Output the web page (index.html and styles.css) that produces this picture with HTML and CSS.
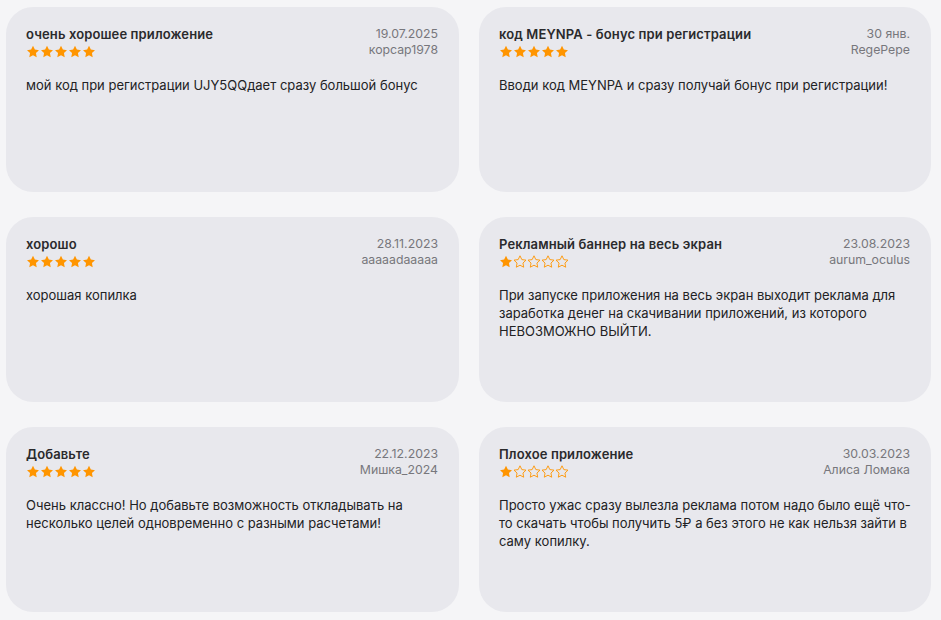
FILE: index.html
```html
<!DOCTYPE html>
<html lang="ru">
<head>
<meta charset="utf-8">
<link rel="stylesheet" href="styles.css">
</head>
<body>
<svg width="0" height="0" class="defs">
  <defs>
    <path id="star" d="M7 0.8 L8.85 4.6 L13 5.15 L9.95 8.05 L10.7 12.2 L7 10.2 L3.3 12.2 L4.05 8.05 L1 5.15 L5.15 4.6 Z"/>
  </defs>
</svg>
<main class="grid">
  <article class="card">
    <div class="head">
      <div class="left">
        <div class="title">очень хорошее приложение</div>
        <div class="stars s5"></div>
      </div>
      <div class="meta"><div>19.07.2025</div><div>корсар1978</div></div>
    </div>
    <p class="body">мой код при регистрации UJY5QQдает сразу большой бонус</p>
  </article>
  <article class="card">
    <div class="head">
      <div class="left">
        <div class="title">код MEYNPA - бонус при регистрации</div>
        <div class="stars s5"></div>
      </div>
      <div class="meta"><div>30 янв.</div><div>RegePepe</div></div>
    </div>
    <p class="body">Вводи код MEYNPA и сразу получай бонус при регистрации!</p>
  </article>
  <article class="card">
    <div class="head">
      <div class="left">
        <div class="title">хорошо</div>
        <div class="stars s5"></div>
      </div>
      <div class="meta"><div>28.11.2023</div><div>aaaaadaaaaa</div></div>
    </div>
    <p class="body">хорошая копилка</p>
  </article>
  <article class="card">
    <div class="head">
      <div class="left">
        <div class="title">Рекламный баннер на весь экран</div>
        <div class="stars s1"></div>
      </div>
      <div class="meta"><div>23.08.2023</div><div>aurum_oculus</div></div>
    </div>
    <p class="body">При запуске приложения на весь экран выходит реклама для заработка денег на скачивании приложений, из которого НЕВОЗМОЖНО ВЫЙТИ.</p>
  </article>
  <article class="card">
    <div class="head">
      <div class="left">
        <div class="title">Добавьте</div>
        <div class="stars s5"></div>
      </div>
      <div class="meta"><div>22.12.2023</div><div>Мишка_2024</div></div>
    </div>
    <p class="body">Очень классно! Но добавьте возможность откладывать на несколько целей одновременно с разными расчетами!</p>
  </article>
  <article class="card">
    <div class="head">
      <div class="left">
        <div class="title">Плохое приложение</div>
        <div class="stars s1"></div>
      </div>
      <div class="meta"><div>30.03.2023</div><div>Алиса Ломака</div></div>
    </div>
    <p class="body">Просто ужас сразу вылезла реклама потом надо было ещё что-то скачать чтобы получить 5₽ а без этого не как нельзя зайти в саму копилку.</p>
  </article>
</main>
<script>
document.querySelectorAll('.stars').forEach(function(el){
  var n = el.classList.contains('s5') ? 5 : 1;
  var html = '';
  for (var i = 0; i < 5; i++) {
    html += '<svg class="star ' + (i < n ? 'on' : 'off') + '" width="14" height="13" viewBox="0 0 14 13"><use href="#star"/></svg>';
  }
  el.innerHTML = html;
});
</script>
</body>
</html>
```
FILE: styles.css
```css
html, body {
  margin: 0;
  padding: 0;
  background: #f5f5f7;
}
body {
  font-family: Inter, "Noto Sans", sans-serif;
  color: #1d1d1f;
  font-size: 13px;
}
.defs {
  position: absolute;
  width: 0;
  height: 0;
}
.grid {
  display: grid;
  grid-template-columns: 453px 452px;
  column-gap: 20px;
  row-gap: 25px;
  padding: 7px 0 0 6px;
}
.card {
  background: #e8e8ed;
  border-radius: 27px;
  height: 185px;
  box-sizing: border-box;
  padding: 19px 20px 0 20px;
}
.head {
  display: flex;
  justify-content: space-between;
  align-items: flex-start;
  margin-right: 1px;
}
.title {
  font-weight: 600;
  font-size: 13px;
  line-height: 16px;
  letter-spacing: 0.12px;
  color: #2a2a2c;
}
.stars {
  display: flex;
  margin-top: 2px;
  height: 14px;
  align-items: center;
}
.star {
  display: block;
}
.star.on {
  fill: #ff9500;
}
.star.off {
  fill: none;
  stroke: #ff9500;
  stroke-width: 0.9;
}
.meta {
  text-align: right;
  color: #77777c;
  font-size: 12.3px;
  line-height: 16px;
}
.body {
  margin: 18px 0 0;
  line-height: 18px;
  font-size: 13px;
  letter-spacing: 0;
  color: #222224;
}
```
